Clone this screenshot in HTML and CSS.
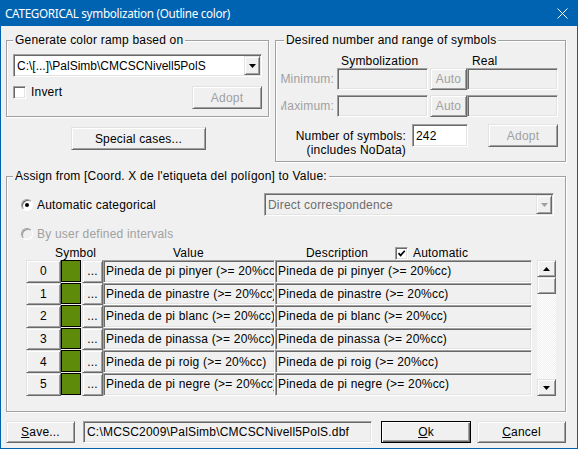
FILE: index.html
```html
<!DOCTYPE html>
<html lang="en">
<head>
<meta charset="utf-8">
<title>CATEGORICAL symbolization</title>
<link rel="stylesheet" href="styles.css">
</head>
<body>
<div class="window">
  <header class="titlebar">
    <span class="title">CATEGORICAL symbolization (Outline color)</span>
    <svg class="close" width="11" height="11" viewBox="0 0 11 11"><path d="M0.5 0.5L10.5 10.5M10.5 0.5L0.5 10.5" stroke="#fff" stroke-width="1" fill="none"/></svg>
  </header>
  <main class="client">
    <div class="top">
      <div class="leftcol">
        <fieldset class="group g1">
          <legend>Generate color ramp based on</legend>
          <div class="combo">
            <span class="combo-text tight">C:\[...]\PalSimb\CMCSCNivell5PolS</span>
            <span class="btn drop"><svg width="7" height="4" viewBox="0 0 7 4"><polygon points="0,0 7,0 3.5,4" fill="#000"/></svg></span>
          </div>
          <div class="invert-row">
            <span class="check"><span class="box"></span><span>Invert</span></span>
            <span class="btn dis adopt">Adopt</span>
          </div>
        </fieldset>
        <span class="btn special">Special cases...</span>
      </div>
      <fieldset class="group g2">
        <legend>Desired number and range of symbols</legend>
        <div class="hdr2"><span class="h-sym">Symbolization</span><span>Real</span></div>
        <div class="mrow">
          <span class="mlabel"><span>Minimum:</span></span>
          <span class="edit ro medit"></span>
          <span class="btn dis auto">Auto</span>
          <span class="edit ro medit"></span>
        </div>
        <div class="mrow">
          <span class="mlabel"><span>Maximum:</span></span>
          <span class="edit ro medit"></span>
          <span class="btn dis auto">Auto</span>
          <span class="edit ro medit"></span>
        </div>
        <div class="nrow">
          <div class="nlabel">Number of symbols:<br>(includes NoData)</div>
          <span class="edit nedit">242</span>
          <span class="btn dis adopt adopt2">Adopt</span>
        </div>
      </fieldset>
    </div>

    <fieldset class="group g3">
      <legend>Assign from [Coord. X de l'etiqueta del polígon] to Value:</legend>
      <div class="r1">
        <span class="radio"><span class="dot"></span></span>
        <span>Automatic categorical</span>
        <div class="combo combo2">
          <span class="combo-text">Direct correspondence</span>
          <span class="btn drop"><svg width="7" height="4" viewBox="0 0 7 4"><polygon points="0,0 7,0 3.5,4" fill="#a0a0a0"/></svg></span>
        </div>
      </div>
      <div class="r2">
        <span class="radio rdis"></span>
        <span>By user defined intervals</span>
      </div>
      <div class="hdr3">
        <span class="h-symbol">Symbol</span>
        <span class="h-value">Value</span>
        <span class="h-desc">Description</span>
        <span class="box"><svg width="9" height="9" viewBox="0 0 9 9"><path d="M1.5 4.2L3.6 6.4L7.8 1.8" stroke="#000" stroke-width="1.7" fill="none"/></svg></span>
        <span class="h-auto">Automatic</span>
      </div>
      <div class="gridwrap">
        <div class="table">
          <span class="btn idx">0</span><span class="sw"></span><span class="btn dots">...</span><span class="edit ro cell">Pineda de pi pinyer (&gt;= 20%cc)</span><span class="edit ro cell">Pineda de pi pinyer (&gt;= 20%cc)</span>
          <span class="btn idx">1</span><span class="sw"></span><span class="btn dots">...</span><span class="edit ro cell">Pineda de pinastre (&gt;= 20%cc)</span><span class="edit ro cell">Pineda de pinastre (&gt;= 20%cc)</span>
          <span class="btn idx">2</span><span class="sw"></span><span class="btn dots">...</span><span class="edit ro cell">Pineda de pi blanc (&gt;= 20%cc)</span><span class="edit ro cell">Pineda de pi blanc (&gt;= 20%cc)</span>
          <span class="btn idx">3</span><span class="sw"></span><span class="btn dots">...</span><span class="edit ro cell">Pineda de pinassa (&gt;= 20%cc)</span><span class="edit ro cell">Pineda de pinassa (&gt;= 20%cc)</span>
          <span class="btn idx">4</span><span class="sw"></span><span class="btn dots">...</span><span class="edit ro cell">Pineda de pi roig (&gt;= 20%cc)</span><span class="edit ro cell">Pineda de pi roig (&gt;= 20%cc)</span>
          <span class="btn idx">5</span><span class="sw"></span><span class="btn dots">...</span><span class="edit ro cell">Pineda de pi negre (&gt;= 20%cc)</span><span class="edit ro cell">Pineda de pi negre (&gt;= 20%cc)</span>
        </div>
        <div class="sb">
          <span class="btn sbb"><svg width="7" height="4" viewBox="0 0 7 4"><polygon points="0,4 7,4 3.5,0" fill="#000"/></svg></span>
          <span class="btn sbb"></span>
          <span class="track"></span>
          <span class="btn sbb"><svg width="7" height="4" viewBox="0 0 7 4"><polygon points="0,0 7,0 3.5,4" fill="#000"/></svg></span>
        </div>
      </div>
    </fieldset>

    <div class="bottom">
      <span class="btn save"><span><u>S</u>ave...</span></span>
      <span class="edit ro path">C:\MCSC2009\PalSimb\CMCSCNivell5PolS.dbf</span>
      <span class="btn default ok"><span><u>O</u>k</span></span>
      <span class="btn cancel"><span><u>C</u>ancel</span></span>
    </div>
  </main>
</div>
</body>
</html>
```

FILE: styles.css
```css
* { box-sizing: border-box; }
html, body { margin: 0; padding: 0; }
body {
  font-family: "Liberation Sans", Arial, sans-serif;
  font-size: 12px;
  letter-spacing: 0.2px;
  color: #000;
  background: #f0f0f0;
}
.window {
  width: 578px;
  height: 449px;
  background: #f0f0f0;
  border: 1px solid #0063b1;
  border-top: none;
  display: flex;
  flex-direction: column;
  overflow: hidden;
}
.titlebar {
  flex: none;
  height: 26px;
  background: #0063b1;
  color: #fff;
  display: flex;
  align-items: center;
  justify-content: space-between;
  padding: 0 9px 0 4px;
  font-family: "Noto Sans", sans-serif;
  font-size: 11.7px;
  letter-spacing: -0.3px;
}
.close { display: block; }
.client {
  flex: 1;
  padding: 7px 11px 0 5px;
  display: flex;
  flex-direction: column;
}
.top { display: flex; gap: 6px; align-items: flex-start; }
.leftcol { width: 263px; flex: none; display: flex; flex-direction: column; }

.group {
  margin: 0;
  min-width: 0;
  border: 1px solid #a0a0a0;
  box-shadow: inset 1px 1px #fff, 1px 1px #fff;
}
.group legend {
  padding: 0 2px;
  line-height: 15px;
  height: 15px;
  background: #f0f0f0;
  white-space: nowrap;
}

/* generic controls */
.btn {
  display: flex;
  align-items: center;
  justify-content: center;
  background: #f0f0f0;
  border: 1px solid;
  border-color: #e3e3e3 #696969 #696969 #e3e3e3;
  box-shadow: inset 1px 1px #fff, inset -1px -1px #a0a0a0;
  white-space: nowrap;
}
.dis { color: #a0a0a0; }
.tight { letter-spacing: 0; }
.edit {
  display: flex;
  align-items: center;
  background: #fff;
  border: 1px solid;
  border-color: #a0a0a0 #fff #fff #a0a0a0;
  box-shadow: inset 1px 1px #696969, inset -1px -1px #e3e3e3;
  padding-left: 3px;
  white-space: nowrap;
  overflow: hidden;
}
.edit.ro { background: #f0f0f0; }
.box {
  width: 13px;
  height: 13px;
  flex: none;
  background: #fff;
  border: 1px solid;
  border-color: #a0a0a0 #fff #fff #a0a0a0;
  box-shadow: inset 1px 1px #696969, inset -1px -1px #e3e3e3;
  display: flex;
  align-items: center;
  justify-content: center;
}
.radio {
  width: 12px;
  height: 12px;
  flex: none;
  border-radius: 50%;
  background: #fff;
  border: 1px solid;
  border-color: #a0a0a0 #fff #fff #a0a0a0;
  box-shadow: inset 1px 1px #696969;
  display: flex;
  align-items: center;
  justify-content: center;
  margin: 0 4px 0 8px;
}
.radio .dot { width: 4px; height: 4px; border-radius: 50%; background: #000; }
.radio.rdis { background: #f0f0f0; box-shadow: inset 1px 1px #a0a0a0; }

/* group 1 */
.g1 { width: 263px; padding: 6px 6px 7px 6px; }
.combo {
  height: 23px;
  display: flex;
  align-items: center;
  background: #fff;
  border: 1px solid;
  border-color: #a0a0a0 #fff #fff #a0a0a0;
  box-shadow: inset 1px 1px #696969, inset -1px -1px #e3e3e3;
  padding-left: 3px;
}
.combo-text { flex: 1; white-space: nowrap; overflow: hidden; }
.drop { width: 16px; height: 19px; flex: none; margin-right: 1px; }
.invert-row {
  display: flex;
  justify-content: space-between;
  align-items: flex-start;
  margin-top: 9px;
}
.check { display: flex; align-items: center; gap: 5px; line-height: 13px; }
.adopt { width: 70px; height: 23px; }
.special { width: 135px; height: 23px; margin: 10px 0 0 65px; }

/* group 2 */
.g2 { width: 291px; flex: none; padding: 6px 7px 4px 8px; }
.hdr2 { display: flex; height: 14px; line-height: 14px; }
.h-sym { margin-left: 57px; width: 131px; }
.mrow { display: flex; height: 22px; align-items: center; }
.mrow + .mrow { margin-top: 5px; }
.mlabel {
  width: 53px;
  margin: 0 3px 0 -3px;
  display: flex;
  justify-content: flex-end;
  overflow: hidden;
  white-space: nowrap;
  color: #a0a0a0;
}
.medit { width: 91px; height: 22px; }
.auto { width: 37px; height: 22px; margin-left: 2px; }
.nrow { display: flex; align-items: flex-start; margin-top: 7px; }
.nlabel { width: 122px; text-align: right; line-height: 14px; margin-top: 5px; }
.nedit { width: 56px; height: 23px; margin-left: 6px; }
.adopt2 { margin-left: 20px; }

/* group 3 */
.g3 { margin-top: 7px; padding: 9px 9px 15px 6px; }
.r1 { display: flex; align-items: center; height: 23px; }
.combo2 {
  margin-left: auto;
  margin-right: 2px;
  width: 290px;
  background: #f0f0f0;
  color: #6d6d6d;
}
.r2 { display: flex; align-items: center; height: 14px; margin-top: 11px; color: #a0a0a0; }
.hdr3 { display: flex; align-items: center; height: 14px; margin-top: 5px; }
.h-symbol { margin-left: 42px; width: 118px; }
.h-value { width: 133px; }
.h-desc { width: 89px; }
.h-auto { margin-left: 5px; }
.gridwrap { display: flex; margin-left: 13px; }
.table {
  display: grid;
  grid-template-columns: 35px 21px 21px 172px 257px;
  grid-auto-rows: 22.6px;
}
.sw {
  background: #5f8b0b;
  border: 1px solid #000;
  margin: 0 1px 1px 0;
}
.cell { padding-left: 2px; }
.sb { width: 19px; height: 136px; margin-left: 5px; display: flex; flex-direction: column; }
.sbb { height: 17px; flex: none; }
.track {
  flex: 1;
  background: repeating-conic-gradient(#fff 0 25%, #f0f0f0 0 50%) 0 0 / 2px 2px;
}

/* bottom */
.bottom { display: flex; height: 22px; margin-top: 9px; }
.save { width: 69px; }
.path { width: 289px; margin-left: 8px; }
.ok { width: 90px; margin-left: 9px; }
.cancel { width: 89px; margin-left: 6px; }
.default {
  border-color: #000;
  box-shadow: inset 1px 1px #fff, inset -1px -1px #696969, inset -2px -2px #a0a0a0;
}
```
